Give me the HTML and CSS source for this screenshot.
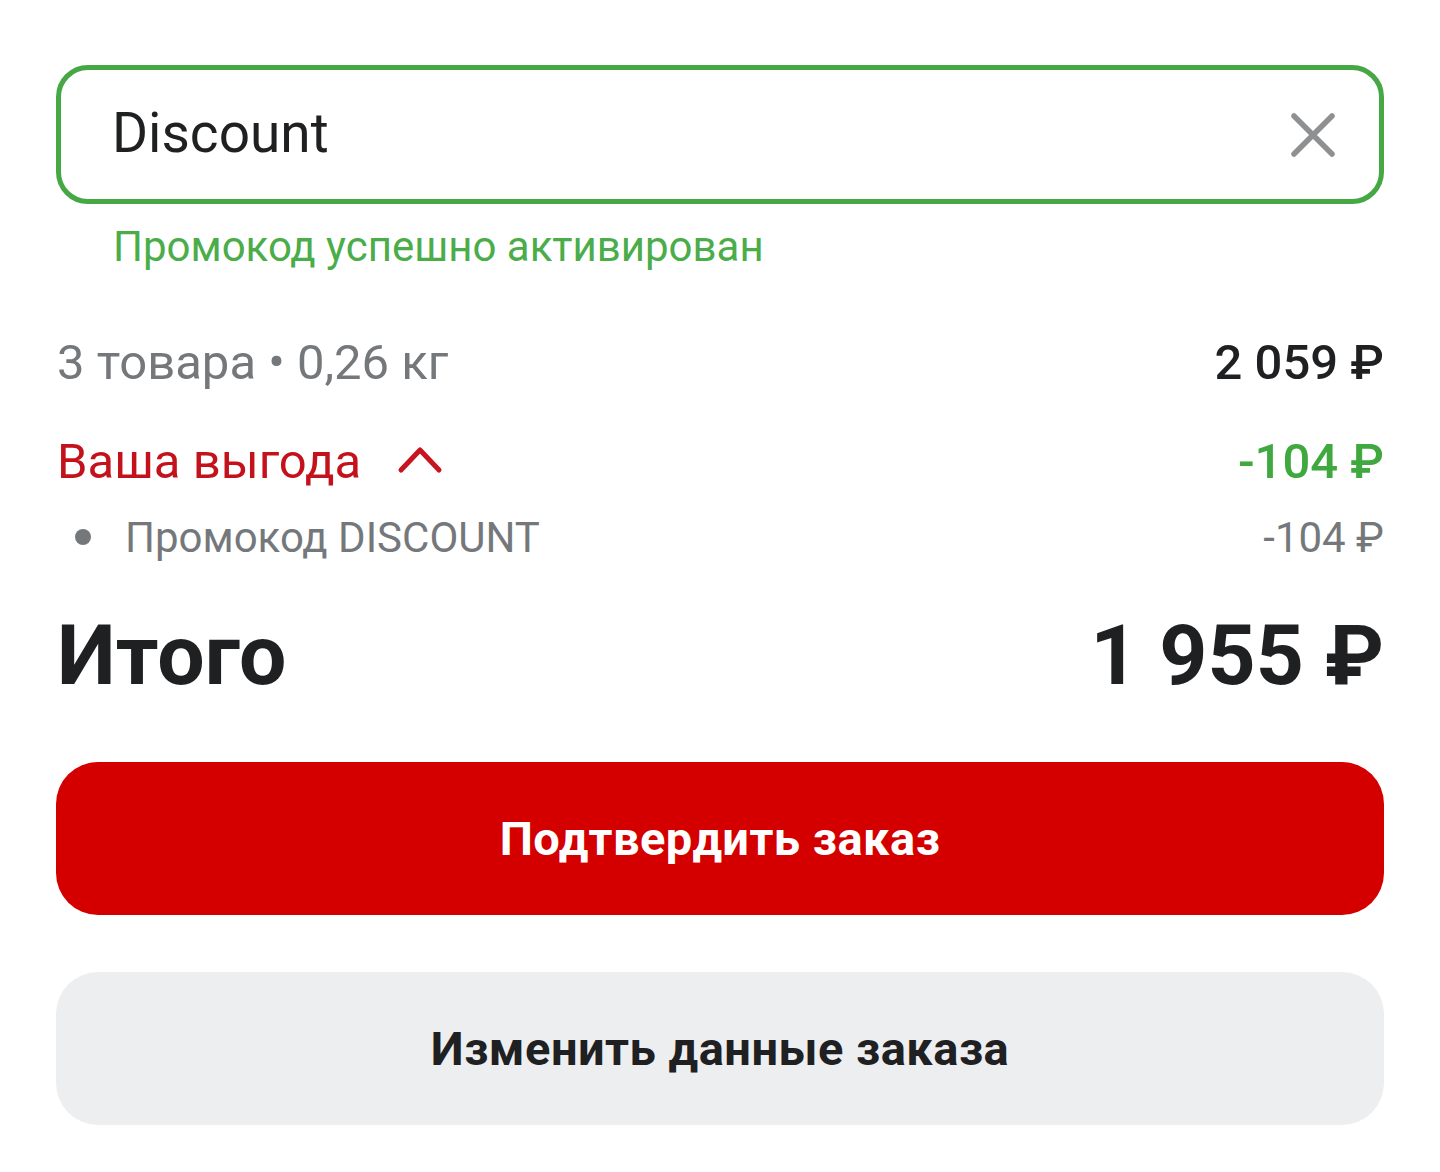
FILE: index.html
```html
<!DOCTYPE html>
<html lang="ru">
<head>
<meta charset="utf-8">
<title>Промокод</title>
<link rel="stylesheet" href="styles.css">
</head>
<body>
<div class="page">
  <div class="promo-field">
    <span class="promo-value">Discount</span>
    <button class="clear" aria-label="Очистить">
      <svg width="48" height="48" viewBox="0 0 48 48"><path d="M5 5 L43 43 M43 5 L5 43" stroke="#8e9092" stroke-width="5.5" stroke-linecap="round" fill="none"/></svg>
    </button>
  </div>
  <p class="promo-hint">Промокод успешно активирован</p>

  <div class="summary">
    <div class="row row-items">
      <span class="items-label">3 товара • 0,26 кг</span>
      <span class="items-price">2 059 ₽</span>
    </div>
    <div class="row row-benefit">
      <span class="benefit-label">Ваша выгода
        <svg class="chevron" width="46" height="30" viewBox="0 0 46 30"><path d="M4 26 L23 6 L42 26" stroke="#c8141e" stroke-width="5" stroke-linecap="round" stroke-linejoin="round" fill="none"/></svg>
      </span>
      <span class="benefit-amount">-104 ₽</span>
    </div>
    <div class="row row-sub">
      <span class="sub-label"><i class="dot"></i>Промокод DISCOUNT</span>
      <span class="sub-amount">-104 ₽</span>
    </div>
    <div class="row row-total">
      <span class="total-label">Итого</span>
      <span class="total-amount">1 955 ₽</span>
    </div>
  </div>

  <button class="btn btn-primary">Подтвердить заказ</button>
  <button class="btn btn-secondary">Изменить данные заказа</button>
</div>
</body>
</html>
```

FILE: styles.css
```css
* { box-sizing: border-box; }
html, body { margin: 0; padding: 0; background: #ffffff; }
body {
  font-family: Roboto, "Noto Sans", "Liberation Sans", sans-serif;
  color: #1f2022;
  width: 1440px;
  height: 1172px;
  overflow: hidden;
}
.page {
  padding: 65px 56px 0 56px;
  display: flex;
  flex-direction: column;
}
.promo-field {
  height: 139px;
  border: 5px solid #45a845;
  border-radius: 32px;
  display: flex;
  align-items: center;
  justify-content: space-between;
  padding: 0 42px 0 51px;
}
.promo-value {
  font-size: 55px;
  color: #1f2022;
  line-height: 1;
  padding-bottom: 2px;
}
.clear {
  background: none;
  border: 0;
  padding: 0;
  width: 48px;
  height: 48px;
  display: flex;
}
.promo-hint {
  margin: 19px 0 0 57px;
  font-size: 42px;
  line-height: 48px;
  color: #4aad4a;
}
.summary {
  display: flex;
  flex-direction: column;
  margin-top: 63px;
}
.row {
  display: flex;
  justify-content: space-between;
  align-items: center;
}
.row-items { height: 56px; padding-left: 1px; }
.items-label { font-size: 49px; color: #75787b; }
.items-price { font-size: 49px; font-weight: 500; color: #1f2022; }
.row-benefit { height: 56px; margin-top: 43px; padding-left: 1px; }
.benefit-label {
  font-size: 49px;
  color: #c4121c;
  display: flex;
  align-items: center;
  gap: 36px;
}
.chevron { margin-top: -4px; }
.benefit-amount { font-size: 49px; font-weight: 500; color: #3fa83f; }
.row-sub { height: 50px; margin-top: 23px; }
.sub-label {
  font-size: 42px;
  color: #75787b;
  display: flex;
  align-items: center;
}
.dot {
  width: 16px;
  height: 16px;
  border-radius: 50%;
  background: #75787b;
  margin: 0 34px 0 19px;
}
.sub-amount { font-size: 42px; color: #75787b; }
.row-total { height: 100px; margin-top: 43px; padding-left: 1px; }
.total-label { font-size: 84px; font-weight: 700; color: #1f2022; }
.total-amount { font-size: 84px; font-weight: 700; color: #1f2022; }
.btn {
  height: 153px;
  border: 0;
  border-radius: 42px;
  font-family: inherit;
  font-size: 47px;
  font-weight: 700;
  width: 100%;
  letter-spacing: 0.5px;
}
.btn-primary {
  margin-top: 57px;
  background: #d40000;
  color: #ffffff;
}
.btn-secondary {
  margin-top: 57px;
  background: #edeef0;
  color: #1f2022;
}
```
